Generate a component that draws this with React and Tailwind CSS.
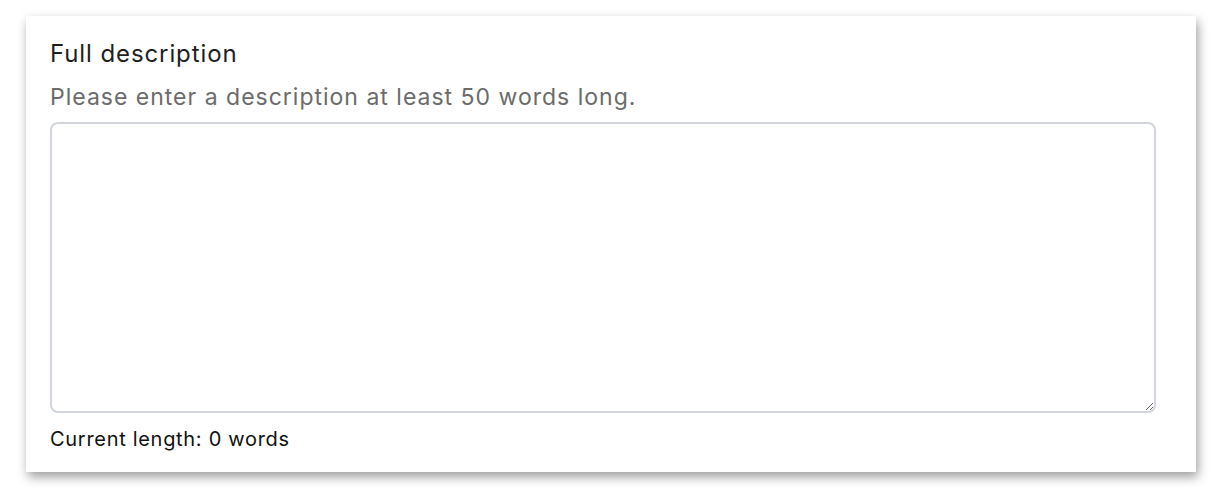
import React, { useState } from 'react';

export default function App() {
  const [text, setText] = useState('');
  const words = text.trim() ? text.trim().split(/\s+/).length : 0;

  return (
    <div className="w-[1222px] h-[496px] bg-white pt-4 pl-[26px] font-['Inter',sans-serif]">
      <div className="w-[1170px] h-[456px] bg-white shadow-[2px_5px_10px_rgba(0,0,0,0.38)] px-6 pt-6">
        <label className="block text-[24px] leading-[28px] text-[#1f1f1f] tracking-[0.9px]">Full description</label>
        <p className="mt-[15px] text-[23px] leading-[28px] text-[#6b6b6b] tracking-[1px]">
          Please enter a description at least 50 words long.
        </p>
        <textarea
          value={text}
          onChange={e => setText(e.target.value)}
          className="mt-[11px] block w-[1106px] h-[291px] rounded-lg border-2 border-[#d2d5dc] bg-white outline-none"
        />
        <p className="mt-[14px] text-[20px] leading-6 text-[#111] tracking-[0.7px]">Current length: {words} words</p>
      </div>
    </div>
  );
}
